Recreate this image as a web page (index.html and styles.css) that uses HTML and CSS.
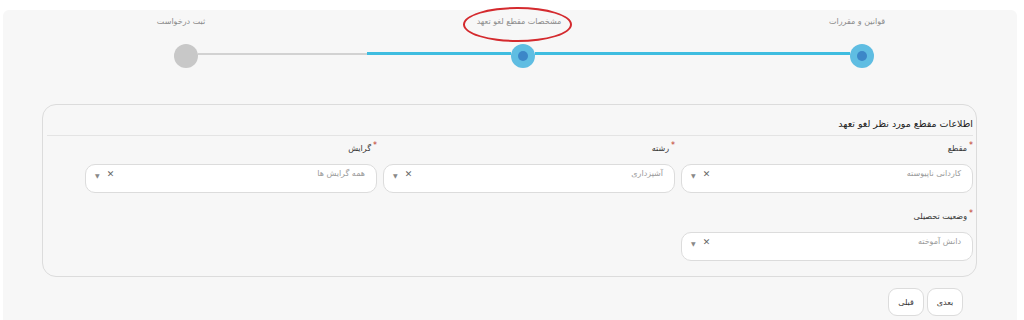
FILE: index.html
```html
<!DOCTYPE html>
<html lang="fa" dir="rtl">
<head>
<meta charset="utf-8">
<title>لغو تعهد</title>
<link rel="stylesheet" href="styles.css">
</head>
<body>
<div class="panel">
  <div class="step-labels">
    <span class="step-label">قوانین و مقررات</span>
    <span class="step-label current">مشخصات مقطع لغو تعهد<span class="mark"></span></span>
    <span class="step-label">ثبت درخواست</span>
  </div>
  <div class="step-track">
    <span class="dot done"></span>
    <span class="line blue first"></span>
    <span class="dot done"></span>
    <span class="line blue second"></span>
    <span class="line gray"></span>
    <span class="dot todo"></span>
  </div>

  <div class="card">
    <div class="card-title">اطلاعات مقطع مورد نظر لغو تعهد</div>
    <div class="sep"></div>
    <div class="fields">
      <div class="field">
        <label class="lbl"><span class="req">*</span>مقطع</label>
        <div class="select"><span class="val">کاردانی ناپیوسته</span><span class="clear">✕</span><span class="arrow">▼</span></div>
      </div>
      <div class="field">
        <label class="lbl"><span class="req">*</span>رشته</label>
        <div class="select"><span class="val">آشپزداری</span><span class="clear">✕</span><span class="arrow">▼</span></div>
      </div>
      <div class="field">
        <label class="lbl"><span class="req">*</span>گرایش</label>
        <div class="select"><span class="val">همه گرایش ها</span><span class="clear">✕</span><span class="arrow">▼</span></div>
      </div>
      <div class="field row2">
        <label class="lbl"><span class="req">*</span>وضعیت تحصیلی</label>
        <div class="select"><span class="val">دانش آموخته</span><span class="clear">✕</span><span class="arrow">▼</span></div>
      </div>
    </div>
  </div>

  <div class="actions">
    <button class="btn">بعدی</button>
    <button class="btn">قبلی</button>
  </div>
</div>
</body>
</html>
```

FILE: styles.css
```css
* { box-sizing: border-box; }
html, body { margin: 0; padding: 0; background: #ffffff; }
body {
  font-family: "DejaVu Sans", "Noto Sans", sans-serif;
  direction: rtl;
  width: 1024px;
  height: 320px;
  overflow: hidden;
}
.panel {
  margin: 10px 7px 0 3px;
  height: 310px;
  background: #f7f7f7;
  border-radius: 6px 6px 0 0;
}

/* stepper labels */
.step-labels {
  display: flex;
  gap: 138px;
  padding-top: 4px;
  padding-right: 60px;
  height: 20px;
}
.step-label {
  width: 200px;
  text-align: center;
  font-size: 8px;
  line-height: 16px;
  color: #8a8a8a;
}
.step-label.current { position: relative; }
.mark {
  position: absolute;
  left: 44px;
  top: -7px;
  width: 109px;
  height: 35px;
  border: 2px solid #d42a2e;
  border-radius: 50%;
}

/* stepper track */
.step-track {
  display: flex;
  align-items: flex-start;
  margin-top: 14px;
  padding-right: 143px;
  height: 24px;
}
.dot {
  width: 24px;
  height: 24px;
  border-radius: 50%;
  flex: none;
  display: flex;
  align-items: center;
  justify-content: center;
}
.dot.done { background: #5fbde2; }
.dot.done::after {
  content: "";
  width: 10px;
  height: 10px;
  border-radius: 50%;
  background: #3c87c8;
}
.dot.todo { background: #c8c8c8; }
.line { flex: none; margin-top: 8px; }
.line.blue { height: 3px; background: #3fbde0; }
.line.first { width: 315px; }
.line.second { width: 144px; }
.line.gray { width: 169px; height: 2px; margin-top: 8.5px; background: #d2d2d2; }

/* card */
.card {
  margin: 36px 40px 0 39px;
  border: 1px solid #dcdcdc;
  border-radius: 14px;
  padding: 0 3px 15px;
  background: #f7f7f7;
}
.card-title {
  padding-top: 10px;
  height: 28px;
  font-size: 9.5px;
  line-height: 18px;
  color: #222;
}
.sep {
  margin: 2px 0 0 1px;
  height: 1px;
  background: #e4e4e4;
}
.fields {
  display: grid;
  grid-template-columns: repeat(3, 292px);
  column-gap: 6px;
  justify-content: start;
}
.field { display: flex; flex-direction: column; }
.row2 { grid-column: 1; margin-top: 17px; }
.lbl {
  display: block;
  height: 14px;
  margin-top: 6px;
  margin-bottom: 8px;
  font-size: 8px;
  line-height: 14px;
  color: #333;
  overflow: visible;
}
.row2 .lbl { margin-top: 0; }
.req {
  color: #c0392b;
  font-size: 8px;
  line-height: 0;
  position: relative;
  top: -3px;
  margin-left: 2px;
}
.select {
  height: 29px;
  border: 1px solid #dcdcdc;
  border-radius: 10px;
  background: #ffffff;
  display: flex;
  align-items: flex-start;
  padding: 2px 11px 0 9px;
  line-height: 14px;
}
.val {
  flex: 1;
  font-size: 8px;
  color: #9a9a9a;
}
.clear {
  font-size: 9px;
  font-weight: bold;
  color: #666;
  margin-left: 7px;
}
.arrow {
  font-size: 6px;
  color: #888;
  margin-top: 2px;
}

/* buttons */
.actions {
  display: flex;
  gap: 3px;
  padding-right: 54px;
  margin-top: 11px;
}
.btn {
  height: 28px;
  width: 36px;
  padding: 0;
  border: 1px solid #dcdcdc;
  border-radius: 9px;
  background: #ffffff;
  font-family: "DejaVu Sans", sans-serif;
  font-size: 8px;
  color: #333;
}
```
